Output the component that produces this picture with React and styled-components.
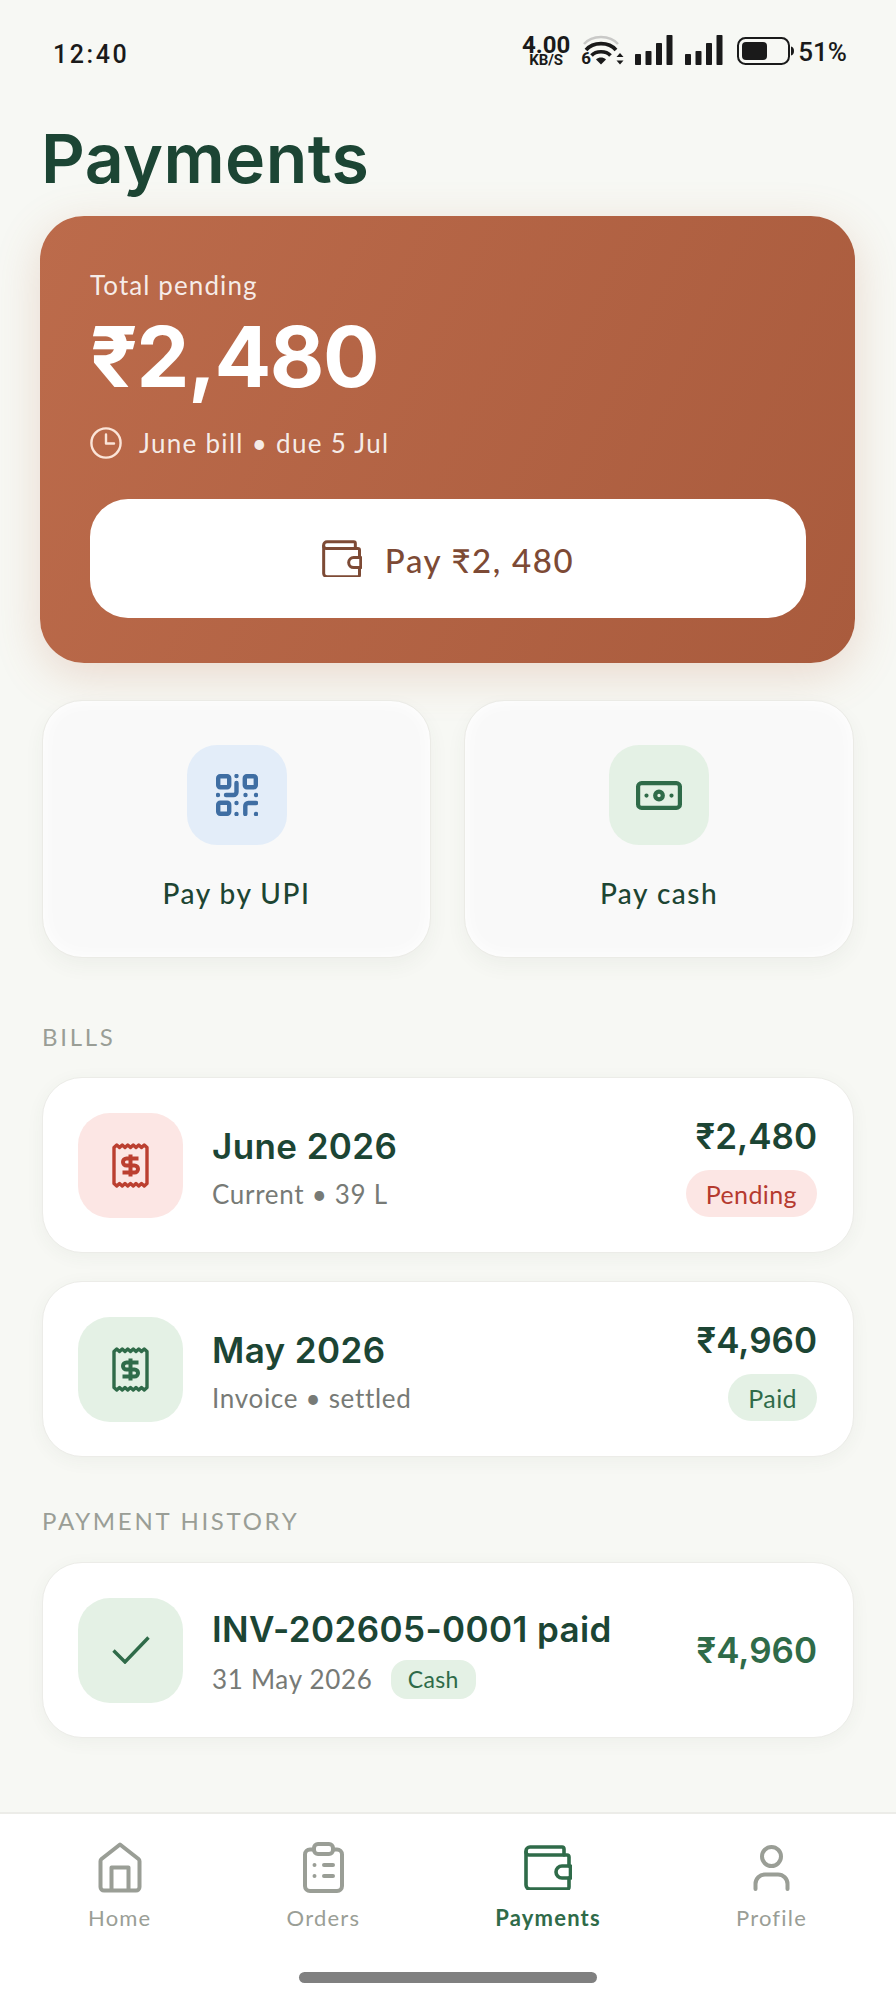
import React from 'react';
import styled, { createGlobalStyle } from 'styled-components';

const GlobalStyle = createGlobalStyle`
  html, body {
    margin: 0;
    padding: 0;
    background: #f7f8f4;
  }

  * {
    box-sizing: border-box;
  }
`;

const headingFont = `'Inter', 'Noto Sans', sans-serif`;

const Page = styled.div`
  width: 896px;
  height: 2000px;
  display: flex;
  flex-direction: column;
  background: #f7f8f4;
  font-family: 'Lato', 'Noto Sans', sans-serif;
  overflow: hidden;
`;

const StatusBar = styled.div`
  height: 92px;
  padding: 35px 49px 0 53px;
  display: flex;
  justify-content: space-between;
  align-items: flex-start;
  color: #1a1a1a;
`;

const Time = styled.span`
  font-family: 'Roboto', sans-serif;
  font-size: 25px;
  font-weight: 500;
  letter-spacing: 2.6px;
  line-height: 30px;
  margin-top: 5px;
`;

const StatusRight = styled.div`
  display: flex;
  align-items: flex-start;
`;

const Speed = styled.div`
  display: flex;
  flex-direction: column;
  align-items: center;
  font-family: 'Roboto', sans-serif;
  margin-right: 11px;
`;

const SpeedValue = styled.span`
  font-size: 24px;
  font-weight: 700;
  line-height: 20px;
`;

const SpeedUnit = styled.span`
  font-size: 15px;
  font-weight: 700;
  line-height: 11px;
`;

const WifiWrap = styled.div`
  position: relative;
  width: 43px;
  height: 30px;
  margin-right: 11px;
`;

const WifiBadge = styled.span`
  position: absolute;
  left: 0;
  bottom: -1px;
  font-family: 'Roboto', sans-serif;
  font-size: 17px;
  font-weight: 700;
  line-height: 15px;
`;

const SignalIcon = styled.svg`
  display: block;
  width: 38px;
  height: 30px;
  margin-right: ${(p) => p.$gap}px;
`;

const BatteryIcon = styled.svg`
  display: block;
  width: 57px;
  height: 28px;
  margin: 2px 4px 0 0;
`;

const BatteryText = styled.span`
  font-family: 'Roboto', sans-serif;
  font-size: 26px;
  font-weight: 500;
  line-height: 30px;
  margin-top: 2px;
`;

const Title = styled.h1`
  margin: 28px 0 0;
  padding: 0 0 0 41px;
  height: 96px;
  font-family: ${headingFont};
  font-size: 68px;
  line-height: 76px;
  font-weight: 600;
  letter-spacing: 0.4px;
  color: #1c4534;
`;

const Content = styled.main`
  flex: 1;
  padding: 0 42px;
  display: flex;
  flex-direction: column;
`;

const Hero = styled.section`
  margin: 0 -1px 0 -2px;
  height: 447px;
  padding: 53px 49px 45px 50px;
  display: flex;
  flex-direction: column;
  border-radius: 44px;
  background: linear-gradient(115deg, #bc6b4b 0%, #a95b3d 100%);
  box-shadow: 0 12px 46px rgba(186, 110, 70, 0.22);
  color: #fff;
`;

const HeroLabel = styled.div`
  font-size: 26px;
  line-height: 32px;
  letter-spacing: 1.1px;
  color: rgba(255, 255, 255, 0.88);
`;

const HeroAmount = styled.div`
  margin-top: 6px;
  font-family: ${headingFont};
  font-size: 84px;
  line-height: 100px;
  font-weight: 700;
  letter-spacing: -1.5px;
`;

const HeroDue = styled.div`
  margin-top: 20px;
  display: flex;
  align-items: center;
  gap: 17px;
  font-size: 26px;
  line-height: 32px;
  letter-spacing: 1.3px;
  color: rgba(255, 255, 255, 0.88);
`;

const PayButton = styled.button`
  margin-top: auto;
  height: 119px;
  border: 0;
  border-radius: 38px;
  background: #fff;
  display: flex;
  align-items: center;
  justify-content: center;
  gap: 23px;
  font-family: inherit;
  font-size: 33px;
  font-weight: 500;
  letter-spacing: 1.6px;
  color: #7d4a35;
`;

const PayText = styled.span`
  margin-top: 3px;
`;

const Actions = styled.div`
  margin-top: 37px;
  display: grid;
  grid-template-columns: 389px 390px;
  gap: 33px;
`;

const ActionCard = styled.div`
  height: 258px;
  padding-top: 44px;
  display: flex;
  flex-direction: column;
  align-items: center;
  border-radius: 40px;
  background: #f9f9f9;
  border: 1px solid #ebebe6;
  box-shadow: inset 0 0 18px #fff, 0 8px 20px rgba(60, 70, 50, 0.05);
`;

const ActionTile = styled.div`
  width: 100px;
  height: 100px;
  border-radius: 30px;
  display: flex;
  align-items: center;
  justify-content: center;
  background: ${(p) => p.$bg};
`;

const ActionLabel = styled.div`
  margin-top: 30px;
  font-size: 28px;
  line-height: 36px;
  font-weight: 500;
  letter-spacing: 1.5px;
  color: #1d4533;
`;

const SectionLabel = styled.div`
  margin: ${(p) => p.$top}px 0 ${(p) => p.$bottom}px;
  font-size: 24px;
  line-height: 28px;
  letter-spacing: 2.7px;
  color: #9a9e96;
`;

const RowList = styled.div`
  display: flex;
  flex-direction: column;
  gap: 28px;
`;

const Row = styled.div`
  height: 176px;
  padding: 0 36px 0 35px;
  display: flex;
  align-items: center;
  border-radius: 40px;
  background: #fff;
  border: 1px solid #ecece8;
  box-shadow: 0 4px 18px rgba(60, 70, 50, 0.05);
`;

const RowTile = styled.div`
  flex: none;
  width: 105px;
  height: 105px;
  border-radius: 32px;
  display: flex;
  align-items: center;
  justify-content: center;
  background: ${(p) => p.$bg};
`;

const RowBody = styled.div`
  flex: 1;
  margin: 6px 0 0 29px;
`;

const RowTitle = styled.div`
  font-family: ${headingFont};
  font-size: 35px;
  line-height: 42px;
  font-weight: 600;
  letter-spacing: 0.4px;
  color: #1c4534;
`;

const RowSub = styled.div`
  margin-top: 10px;
  display: flex;
  align-items: center;
  gap: 18px;
  font-size: 26px;
  line-height: 34px;
  letter-spacing: 0.7px;
  color: #777a76;
`;

const RowEnd = styled.div`
  margin-top: 2px;
  display: flex;
  flex-direction: column;
  align-items: flex-end;
  gap: 13px;
`;

const Amount = styled.div`
  font-family: ${headingFont};
  font-size: 35px;
  line-height: 42px;
  font-weight: 600;
  color: ${(p) => p.$color};
`;

const Pill = styled.span`
  height: 47px;
  padding: 0 20px;
  border-radius: 24px;
  display: inline-flex;
  align-items: center;
  font-size: 25px;
  letter-spacing: 0.4px;
  background: ${(p) => p.$bg};
  color: ${(p) => p.$color};
`;

const SmallPill = styled(Pill)`
  height: 39px;
  padding: 0 17px;
  border-radius: 16px;
  font-size: 23px;
`;

const Nav = styled.nav`
  position: relative;
  height: 188px;
  padding: 28px 89px 0 88px;
  display: flex;
  justify-content: space-between;
  align-items: flex-start;
  background: #fff;
  border-top: 2px solid #ecece8;
`;

const NavItem = styled.div`
  display: flex;
  flex-direction: column;
  align-items: center;
  color: ${(p) => (p.$active ? '#2f6b49' : '#9a9e96')};
`;

const NavIcon = styled.div`
  height: 51px;
  display: flex;
  align-items: center;
`;

const NavLabel = styled.span`
  margin-top: 11px;
  font-size: 22px;
  line-height: 28px;
  letter-spacing: 1.2px;
  font-weight: ${(p) => (p.$active ? 700 : 400)};
`;

const HomeIndicator = styled.div`
  position: absolute;
  left: 299px;
  top: 158px;
  width: 298px;
  height: 11px;
  border-radius: 6px;
  background: #808080;
`;

const WifiGlyph = () => (
  <svg width="43" height="30" viewBox="0 0 43 30" fill="none">
    <path d="M3 9C11-.5 29-.5 37 9" stroke="#c9c9c7" strokeWidth="2.5" />
    <path d="M5 15C12 6.5 28 6.5 35 15" stroke="#1a1a1a" strokeWidth="3.6" />
    <path d="M10.5 20.5C15 15.5 25 15.5 29.5 20.5" stroke="#1a1a1a" strokeWidth="3.6" />
    <path d="M15 24.5c3-2.6 7-2.6 10 0L20 29.5Z" fill="#1a1a1a" />
    <path d="M39 18l3.5 4h-7ZM39 29.5l3.5-4h-7Z" fill="#1a1a1a" />
  </svg>
);

const Signal = ({ gap }) => (
  <SignalIcon $gap={gap} viewBox="0 0 38 30" fill="#1a1a1a">
    <rect x="0" y="19" width="6" height="11" rx="0.8" />
    <rect x="10.5" y="16" width="6" height="14" rx="0.8" />
    <rect x="21" y="8" width="6" height="22" rx="0.8" />
    <rect x="31.5" y="0" width="6" height="30" rx="0.8" />
  </SignalIcon>
);

const Battery = () => (
  <BatteryIcon viewBox="0 0 57 28" fill="none">
    <rect x="1" y="1" width="51" height="26" rx="7.5" stroke="#1a1a1a" strokeWidth="2" />
    <rect x="5" y="5" width="25" height="18" rx="4" fill="#1a1a1a" />
    <path d="M54 9.5c2 .4 3 2 3 4.500s-1 4.100-3 4.500Z" fill="#1a1a1a" />
  </BatteryIcon>
);

const ClockIcon = () => (
  <svg width="32" height="32" viewBox="0 0 32 32" fill="none" stroke="#fbe4d8" strokeWidth="2.4" strokeLinecap="round" strokeLinejoin="round">
    <circle cx="16" cy="16" r="14.6" />
    <path d="M16 7.500V16.500H24" />
  </svg>
);

const WalletIcon = ({ size, strokeWidth, color }) => (
  <svg width={size} height={size * 0.94} viewBox="0 0 48 45" fill="none" stroke={color} strokeWidth={strokeWidth} strokeLinecap="round" strokeLinejoin="round">
    <path d="M40 10V4a2 2 0 0 0-2-2H6a4 4 0 0 0-4 4v34a4 4 0 0 0 4 4h37a2 2 0 0 0 2-2v-9" />
    <path d="M2 7a3 3 0 0 0 3 3h38a2 2 0 0 1 2 2v9" />
    <path d="M46.500 21H38a6 6 0 0 0 0 12h8.500Z" />
  </svg>
);

const QrIcon = () => (
  <svg width="42" height="42" viewBox="0 0 42 42" fill="none" stroke="#3f6ea3" strokeWidth="4.4" strokeLinecap="round" strokeLinejoin="round">
    <rect x="2.200" y="2.200" width="11" height="11" rx="2" />
    <rect x="28.800" y="2.200" width="11" height="11" rx="2" />
    <rect x="2.200" y="28.800" width="11" height="11" rx="2" />
    <path d="M20.500 2v.1M20.500 9v9a3 3 0 0 1-3 3H10M2 21v.1M29.500 21v.1M40 21v.1M20.500 29v.1M20.500 40v.1M29.300 40v-8a3 3 0 0 1 3-3H40M40 40v.1" />
  </svg>
);

const CashIcon = () => (
  <svg width="46" height="29" viewBox="0 0 46 29" fill="none" stroke="#2f6b49" strokeWidth="4.2" strokeLinecap="round">
    <rect x="2.100" y="2.100" width="41.800" height="24.800" rx="3.500" />
    <circle cx="23" cy="14.500" r="3.800" />
    <path d="M10.500 14.500v.1M35.500 14.500v.1" />
  </svg>
);

const ReceiptIcon = ({ color }) => (
  <svg width="37" height="45" viewBox="0 0 37 45" fill="none" stroke={color} strokeWidth="3.4" strokeLinejoin="round">
    <path d="M2 4.500l2.750-2.500 2.750 2.500 2.750-2.500 2.750 2.500 2.750-2.500 2.750 2.500 2.750-2.500 2.750 2.500 2.750-2.500 2.750 2.500 2.750-2.500 2.750 2.500V40.500l-2.750 2.500-2.750-2.500-2.750 2.500-2.750-2.500-2.750 2.500-2.750-2.500-2.750 2.500-2.750-2.500-2.750 2.500-2.750-2.500-2.750 2.500-2.750-2.500Z" />
    <path d="M26.500 15.500H14.500a3.500 3.500 0 0 0 0 7h8a3.500 3.500 0 0 1 0 7H10.500M18.500 11.500v22" strokeWidth="4" />
  </svg>
);

const CheckIcon = () => (
  <svg width="38" height="28" viewBox="0 0 38 28" fill="none" stroke="#2f6b49" strokeWidth="3.4">
    <path d="M1.500 14.500L13 26 36.500 1.500" />
  </svg>
);

const HomeGlyph = () => (
  <svg width="46" height="51" viewBox="0 0 46 51" fill="none" stroke="currentColor" strokeWidth="4" strokeLinejoin="round">
    <path d="M23 2.500L41.500 17a3 3 0 0 1 1 2.400V45a3.500 3.500 0 0 1-3.500 3.500H7A3.500 3.500 0 0 1 3.500 45V19.400a3 3 0 0 1 1-2.400Z" />
    <path d="M14.500 48V25.500h17V48" />
  </svg>
);

const OrdersGlyph = () => (
  <svg width="41" height="51" viewBox="0 0 41 51" fill="none" stroke="currentColor" strokeWidth="4" strokeLinecap="round" strokeLinejoin="round">
    <path d="M11 7.500H7a5 5 0 0 0-5 5V44a5 5 0 0 0 5 5h27a5 5 0 0 0 5-5V12.500a5 5 0 0 0-5-5h-4" />
    <rect x="11" y="2" width="19" height="10" rx="4" />
    <path d="M11.500 23v.1M11.500 34v.1M21 23h9M21 34h9" />
  </svg>
);

const ProfileGlyph = () => (
  <svg width="37" height="46" viewBox="0 0 37 46" fill="none" stroke="currentColor" strokeWidth="4" strokeLinecap="round">
    <circle cx="18.500" cy="11.500" r="9.500" />
    <path d="M2.500 44v-5a9.500 9.500 0 0 1 9.500-9.500h13a9.500 9.500 0 0 1 9.500 9.500v5" />
  </svg>
);

const App = () => (
  <Page>
    <GlobalStyle />
    <StatusBar>
      <Time>12:40</Time>
      <StatusRight>
        <Speed>
          <SpeedValue>4.00</SpeedValue>
          <SpeedUnit>KB/S</SpeedUnit>
        </Speed>
        <WifiWrap>
          <WifiGlyph />
          <WifiBadge>6</WifiBadge>
        </WifiWrap>
        <Signal gap={12} />
        <Signal gap={14} />
        <Battery />
        <BatteryText>51%</BatteryText>
      </StatusRight>
    </StatusBar>

    <Title>Payments</Title>

    <Content>
      <Hero>
        <HeroLabel>Total pending</HeroLabel>
        <HeroAmount>₹2,480</HeroAmount>
        <HeroDue>
          <ClockIcon />
          June bill • due 5 Jul
        </HeroDue>
        <PayButton>
          <WalletIcon size={40} strokeWidth={3.6} color="#7d4a35" />
          <PayText>Pay ₹2, 480</PayText>
        </PayButton>
      </Hero>

      <Actions>
        <ActionCard>
          <ActionTile $bg="#e3edf9">
            <QrIcon />
          </ActionTile>
          <ActionLabel>Pay by UPI</ActionLabel>
        </ActionCard>
        <ActionCard>
          <ActionTile $bg="#e4f1e5">
            <CashIcon />
          </ActionTile>
          <ActionLabel>Pay cash</ActionLabel>
        </ActionCard>
      </Actions>

      <SectionLabel $top={65} $bottom={26}>BILLS</SectionLabel>
      <RowList>
        <Row>
          <RowTile $bg="#fce6e4">
            <ReceiptIcon color="#bb3f30" />
          </RowTile>
          <RowBody>
            <RowTitle>June 2026</RowTitle>
            <RowSub>Current • 39 L</RowSub>
          </RowBody>
          <RowEnd>
            <Amount $color="#1c4534">₹2,480</Amount>
            <Pill $bg="#fce6e4" $color="#b53a2f">Pending</Pill>
          </RowEnd>
        </Row>
        <Row>
          <RowTile $bg="#e4f1e5">
            <ReceiptIcon color="#2f6b49" />
          </RowTile>
          <RowBody>
            <RowTitle>May 2026</RowTitle>
            <RowSub>Invoice • settled</RowSub>
          </RowBody>
          <RowEnd>
            <Amount $color="#1c4534">₹4,960</Amount>
            <Pill $bg="#e4f1e5" $color="#2f6b49">Paid</Pill>
          </RowEnd>
        </Row>
      </RowList>

      <SectionLabel $top={50} $bottom={27}>PAYMENT HISTORY</SectionLabel>
      <Row>
        <RowTile $bg="#e4f1e5">
          <CheckIcon />
        </RowTile>
        <RowBody>
          <RowTitle>INV-202605-0001 paid</RowTitle>
          <RowSub>
            31 May 2026
            <SmallPill $bg="#e4f1e5" $color="#2f6b49">Cash</SmallPill>
          </RowSub>
        </RowBody>
        <Amount $color="#2f6b49">₹4,960</Amount>
      </Row>
    </Content>

    <Nav>
      <NavItem>
        <NavIcon><HomeGlyph /></NavIcon>
        <NavLabel>Home</NavLabel>
      </NavItem>
      <NavItem>
        <NavIcon><OrdersGlyph /></NavIcon>
        <NavLabel>Orders</NavLabel>
      </NavItem>
      <NavItem $active>
        <NavIcon><WalletIcon size={48} strokeWidth={3.6} color="currentColor" /></NavIcon>
        <NavLabel $active>Payments</NavLabel>
      </NavItem>
      <NavItem>
        <NavIcon><ProfileGlyph /></NavIcon>
        <NavLabel>Profile</NavLabel>
      </NavItem>
      <HomeIndicator />
    </Nav>
  </Page>
);

export default App;
